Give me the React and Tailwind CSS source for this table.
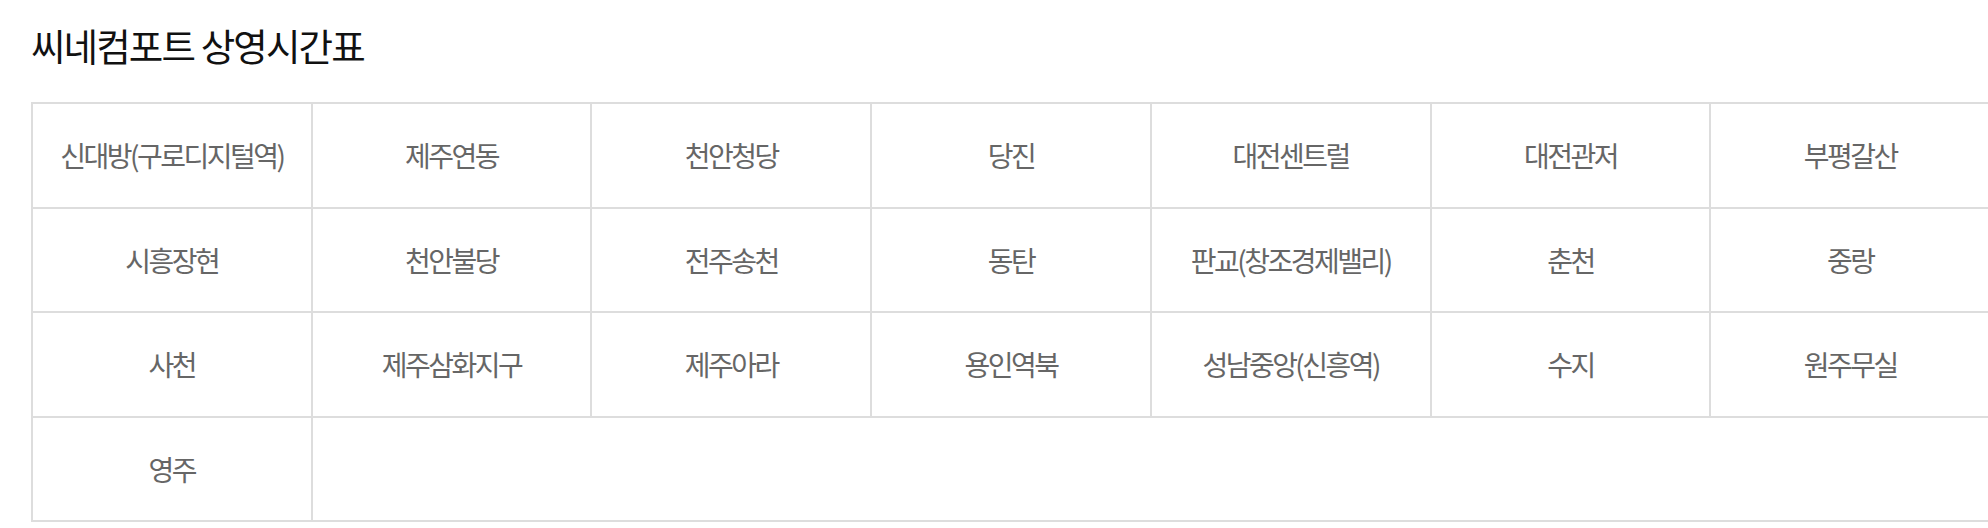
const rows = [
  ["신대방(구로디지털역)", "제주연동", "천안청당", "당진", "대전센트럴", "대전관저", "부평갈산"],
  ["시흥장현", "천안불당", "전주송천", "동탄", "판교(창조경제밸리)", "춘천", "중랑"],
  ["사천", "제주삼화지구", "제주아라", "용인역북", "성남중앙(신흥역)", "수지", "원주무실"],
];

function Cell({ children }) {
  return (
    <div className="h-[104.5px] flex items-center justify-center border-r-2 border-b-2 border-[#dddddd] text-[28px] tracking-[-0.09em] text-[#666666]">
      {children}
    </div>
  );
}

export default function App() {
  return (
    <div
      className="bg-white min-h-screen overflow-hidden pl-[31px] pt-[20px]"
      style={{ fontFamily: '"Noto Sans CJK KR", "Noto Sans", sans-serif' }}
    >
      {/* 제목 */}
      <h1 className="text-[37.5px] leading-[50px] tracking-[-0.05em] text-[#111111] font-normal">
        씨네컴포트 상영시간표
      </h1>

      {/* 지점 목록 */}
      <div className="mt-[32px] w-[1960px] grid grid-cols-7 border-l-2 border-t-2 border-[#dddddd]">
        {rows.map((row) => row.map((name) => <Cell key={name}>{name}</Cell>))}
        <Cell>영주</Cell>
        <div className="col-span-6 border-b-2 border-[#dddddd]" />
      </div>
    </div>
  );
}
